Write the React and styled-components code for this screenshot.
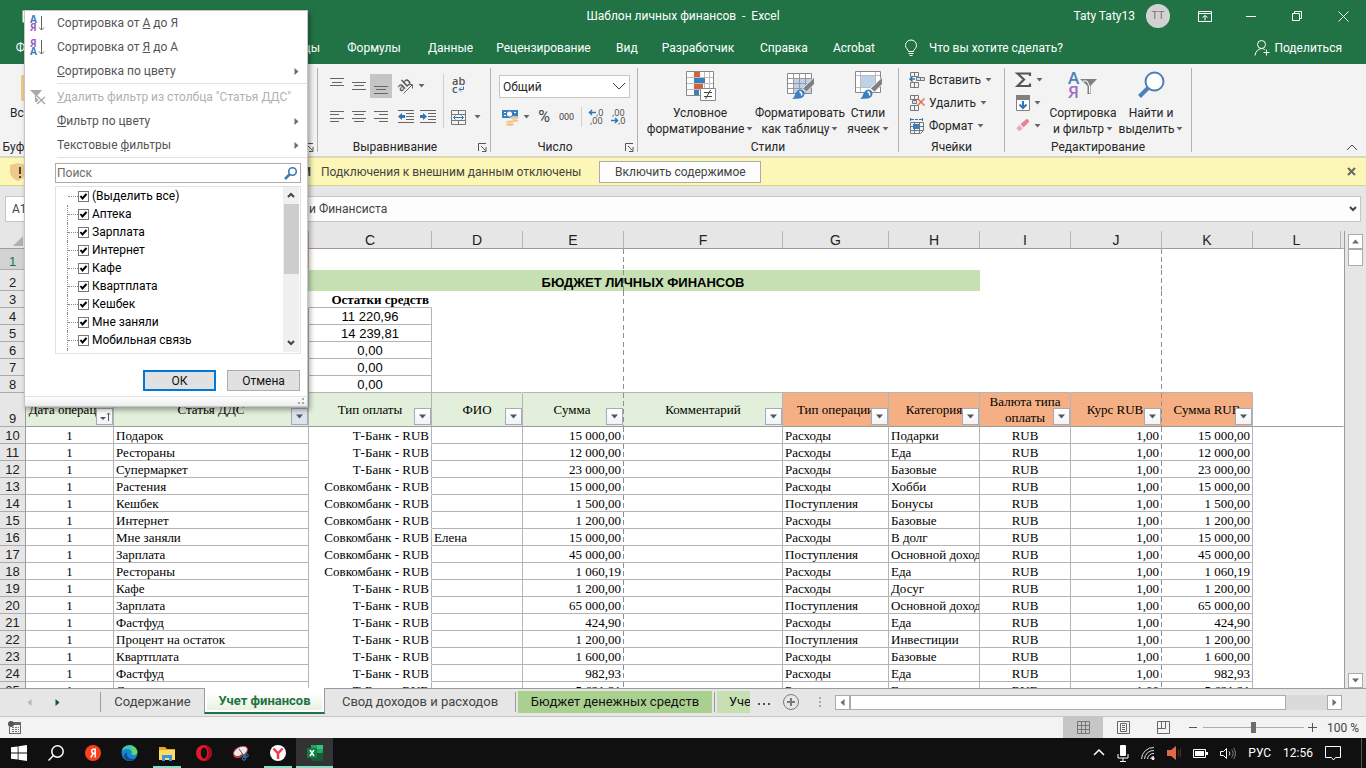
import React from "react";
import styled, { createGlobalStyle, css } from "styled-components";

const ui = `Roboto, "Noto Sans", sans-serif`;
const serif = `"Liberation Serif", serif`;
const arial = `"Liberation Sans", sans-serif`;

const GlobalStyle = createGlobalStyle`
  * {
    box-sizing: border-box;
  }
  body {
    margin: 0;
    font-family: ${ui};
    font-size: 12px;
    line-height: 16px;
    color: #262626;
    overflow: hidden;
  }
  button, input, select {
    font: inherit;
    color: inherit;
    border: 0;
    padding: 0;
    margin: 0;
    background: none;
    border-radius: 0;
  }
  svg {
    display: block;
    flex: none;
    overflow: visible;
  }
`;

const Window = styled.div`
  position: relative;
  display: flex;
  flex-direction: column;
  height: 100vh;
  background: #e6e6e6;
`;

/* ---------- title and tabs ---------- */
const TitleBar = styled.header`
  display: grid;
  grid-template-columns: 1fr auto 1fr;
  align-items: center;
  height: 32px;
  flex: none;
  background: #217346;
  color: #fff;
  white-space: pre;
`;
const QuickAccess = styled.div`
  padding-left: 22px;
`;
const TitleRight = styled.div`
  display: flex;
  align-items: center;
  justify-content: flex-end;
`;
const Avatar = styled.span`
  width: 24px;
  height: 24px;
  margin: 0 12px 0 11px;
  border-radius: 50%;
  background: #d2d2d2;
  color: #8a7468;
  font-size: 11px;
  line-height: 24px;
  text-align: center;
`;
const WindowButton = styled.button`
  display: flex;
  align-items: center;
  justify-content: center;
  width: 46px;
  height: 32px;
`;
const TabBar = styled.nav`
  display: flex;
  align-items: center;
  height: 32px;
  flex: none;
  background: #217346;
  color: #fff;
`;
const RibbonTab = styled.button`
  width: ${(props) => props.$w}px;
  height: 32px;
  white-space: nowrap;
  text-align: ${(props) => props.$align || "center"};
`;
const TellMe = styled.button`
  display: flex;
  align-items: center;
  gap: 12px;
  margin-left: 3px;
`;
const Share = styled.button`
  display: flex;
  align-items: center;
  gap: 4px;
  margin-left: auto;
  padding-right: 24px;
`;

/* ---------- ribbon ---------- */
const RibbonBar = styled.section`
  display: flex;
  height: 93px;
  flex: none;
  padding: 4px 0;
  background: #f3f3f3;
  border-bottom: 1px solid #d2d2d2;
`;
const Group = styled.div`
  display: flex;
  flex-direction: column;
  width: ${(props) => props.$w}px;
  border-right: 1px solid #b1b1b1;
`;
const GroupBody = styled.div`
  display: flex;
  flex: 1;
  align-items: flex-start;
  padding: ${(props) => props.$pad};
`;
const GroupFooter = styled.div`
  display: flex;
  align-items: center;
  height: 9px;
  line-height: 9px;
  text-align: center;
  white-space: nowrap;
  span {
    flex: 1;
  }
  button {
    margin: 0 3px 0 6px;
  }
`;
const ToolGrid = styled.div`
  display: flex;
  flex-direction: column;
  gap: 7px;
`;
const ToolStack = styled(ToolGrid)`
  gap: 0;
  button {
    height: 23px;
  }
`;
const ToolRow = styled.div`
  display: flex;
  align-items: center;
  height: 24px;
`;
const Tool = styled.button`
  display: flex;
  align-items: center;
  justify-content: ${(props) => (props.$start ? "flex-start" : "center")};
  gap: ${(props) => props.$gap || 4}px;
  width: ${(props) => props.$w || 22}px;
  height: 24px;
  white-space: nowrap;
  background: ${(props) => (props.$active ? "#c5c5c5" : "transparent")};
`;
const ToolDivider = styled.div`
  width: 1px;
  height: ${(props) => props.$h}px;
  margin: 0 ${(props) => props.$m || 0}px;
  background: #d0d0d0;
`;
const BigTool = styled.button`
  display: flex;
  flex-direction: column;
  align-items: center;
  width: ${(props) => props.$w}px;
  white-space: nowrap;
  svg.art {
    margin-bottom: 2px;
  }
  span {
    display: flex;
    align-items: center;
    gap: 2px;
  }
`;
const FormatBox = styled.div`
  display: flex;
  align-items: center;
  width: 131px;
  height: 23px;
  padding: 0 3px;
  border: 1px solid #c6c6c6;
  background: #fff;
  select {
    appearance: none;
    flex: 1;
    min-width: 0;
    height: 20px;
  }
`;
const Percent = styled.span`
  font-size: 16px;
  color: #444;
`;
const Thousands = styled.span`
  font-size: 9px;
  color: #444;
`;
const CollapseCorner = styled.button`
  align-self: flex-end;
  margin-left: auto;
  padding-right: 8px;
`;

/* ---------- message bar and formula bar ---------- */
const MessageBar = styled.section`
  display: flex;
  align-items: center;
  height: 29px;
  flex: none;
  padding-left: 10px;
  background: #fcf7b6;
  border-top: 1px solid #e3dea0;
  border-bottom: 1px solid #d8d38b;
  color: #444;
`;
const Warning = styled.strong`
  width: 285px;
  margin-right: 10px;
  text-align: right;
  white-space: nowrap;
`;
const EnableButton = styled.button`
  width: 162px;
  height: 22px;
  margin-left: 18px;
  border: 1px solid #ababab;
  background: #fdfdfd;
`;
const CloseMessage = styled.button`
  margin-left: auto;
  padding-right: 10px;
`;
const FormulaBar = styled.section`
  display: flex;
  gap: 8px;
  flex: none;
  padding: 10px 5px 9px;
  color: #444;
`;
const NameBox = styled.input`
  width: 86px;
  height: 26px;
  padding-left: 6px;
  border: 1px solid #c6c6c6;
  background: #fff;
`;
const FormulaField = styled.div`
  display: flex;
  align-items: center;
  flex: 1;
  height: 26px;
  padding-right: 3px;
  border: 1px solid #c6c6c6;
  background: #fdfdfd;
  input {
    flex: 1;
    height: 20px;
    padding-left: 209px;
  }
`;

/* ---------- sheet ---------- */
const SheetArea = styled.main`
  display: flex;
  flex: 1;
  min-height: 0;
`;
const SheetView = styled.div`
  flex: 1;
  min-width: 0;
  overflow: hidden;
  background: linear-gradient(#e6e6e6 17px, #9b9b9b 17px, #9b9b9b 18px, #fff 18px);
  border-right: 1px solid #9b9b9b;
`;
const Grid = styled.table`
  width: 100%;
  table-layout: fixed;
  border-collapse: separate;
  border-spacing: 0;
  font-family: ${serif};
  font-size: 13px;
  line-height: 15px;
  color: #000;
`;
const ColHead = styled.th`
  height: 18px;
  padding: 1px 0 0;
  background: #e6e6e6;
  border-bottom: 1px solid #9b9b9b;
  border-right: 1px solid ${(props) => (props.$last ? "transparent" : "#b4b4b4")};
  font: 14px/16px ${arial};
  color: #222;
  svg {
    margin: 2px 2px 0 auto;
  }
`;
const RowHead = styled.th`
  height: ${(props) => props.$h || 17}px;
  padding: 1px 0 0;
  background: ${(props) => (props.$active ? "#d2d2d2" : "#e6e6e6")};
  border-right: 1px solid #9b9b9b;
  border-bottom: 1px solid #ababab;
  color: ${(props) => (props.$active ? "#217346" : "#222")};
  font: 13px/15px ${arial};
  vertical-align: bottom;
`;
const dashed = css`
  padding-right: 3px;
  border-right: 0;
  background-image: repeating-linear-gradient(to bottom, #8f8f8f 0 5px, transparent 5px 8px);
  background-size: 1px 100%;
  background-position: ${(props) => props.$dashAt || "right"} top;
  background-repeat: no-repeat;
`;
const Cell = styled.td`
  height: 17px;
  padding: 1px 2px 0;
  overflow: hidden;
  white-space: nowrap;
  text-align: ${(props) => props.$align || "left"};
  border-right: 1px solid ${(props) => props.$edge || (props.$plain ? "transparent" : "#b4b4b4")};
  border-bottom: 1px solid ${(props) => props.$line || (props.$plain || props.$open ? "transparent" : "#b4b4b4")};
  ${(props) => props.$dash && dashed}
`;
const BalanceCell = styled(Cell)`
  font-family: ${arial};
`;
const CaptionCell = styled(Cell)`
  font-weight: bold;
  border-bottom-color: #b4b4b4;
`;
const BannerCell = styled.td`
  height: 21px;
  padding: 4px 0 0;
  background-color: #c6e0b4;
  font: bold 13px/17px ${arial};
  text-align: center;
  ${(props) => props.$dash && dashed}
`;
const HeadCell = styled.td`
  position: relative;
  height: 34px;
  padding: 0;
  overflow: hidden;
  white-space: pre;
  line-height: 16px;
  text-align: center;
  background-color: ${(props) => (props.$orange ? "#f4b084" : "#e2efda")};
  border-right: 1px solid #b4b4b4;
  border-bottom: 1px solid #9b9b9b;
  ${(props) => props.$dash && dashed}
`;
const FilterButton = styled.button`
  position: absolute;
  right: ${(props) => (props.$dash ? 1 : 0)}px;
  bottom: 1px;
  display: flex;
  align-items: center;
  justify-content: center;
  width: 17px;
  height: 17px;
  border: 1px solid #a3abba;
  background: ${(props) => (props.$pressed ? "#dfe3ec" : "linear-gradient(#fff, #f1f3f8)")};
`;
const VScroll = styled.div`
  display: flex;
  flex-direction: column;
  align-items: center;
  width: 21px;
  padding-top: 3px;
  background: #e6e6e6;
`;
const ScrollButton = styled.button`
  display: flex;
  align-items: center;
  justify-content: center;
  width: 15px;
  height: 15px;
  flex: none;
  border: 1px solid #ababab;
  background: #fff;
`;
const VThumb = styled.div`
  width: 15px;
  height: 17px;
  margin-bottom: auto;
  border: 1px solid #ababab;
  background: #fff;
`;

/* ---------- sheet tabs ---------- */
const TabStrip = styled.footer`
  display: flex;
  height: 29px;
  flex: none;
  padding-bottom: 1px;
  background: #e6e6e6;
  border-top: 1px solid #9b9b9b;
  border-bottom: 1px solid #c6c6c6;
  font-size: 13px;
  color: #444;
`;
const TabArrows = styled.div`
  display: flex;
  align-items: center;
  gap: 19px;
  width: 100px;
  height: 26px;
  padding-left: 25px;
`;
const SheetTab = styled.button`
  height: 22px;
  width: ${(props) => props.$w}px;
  margin: 2px 2px 0 2px;
  overflow: hidden;
  white-space: nowrap;
  background: ${(props) => props.$fill || "transparent"};
  color: ${(props) => (props.$fill ? "#111" : "#444")};
  text-align: ${(props) => props.$align || "center"};
  padding-left: ${(props) => (props.$align ? 12 : 0)}px;
`;
const ActiveTab = styled(SheetTab)`
  height: 26px;
  margin: -1px 0 0;
  padding-top: 2px;
  border: 1px solid #9b9b9b;
  border-top: 0;
  border-bottom: 2px solid #217346;
  background: linear-gradient(#fff 20%, #e6f0dc);
  box-shadow: inset 0 0 0 2px #fff;
  color: #217346;
  font-weight: bold;
`;
const TabDivider = styled.div`
  width: 1px;
  height: 20px;
  margin-top: 3px;
  background: #9b9b9b;
`;
const StripTools = styled.div`
  display: flex;
  align-items: center;
  height: 26px;
  padding: 0 7px 0 6px;
  gap: 13px;
`;
const HScroll = styled.div`
  display: flex;
  flex: 1;
  height: 15px;
  margin: 6px 24px 0 0;
  background: #dadada;
`;
const HThumb = styled.div`
  width: 436px;
  margin-right: auto;
  border: 1px solid #ababab;
  background: #fff;
`;

/* ---------- status bar ---------- */
const StatusBar = styled.footer`
  display: flex;
  align-items: center;
  height: 21px;
  flex: none;
  padding-left: 8px;
  background: #f3f3f3;
  color: #444;
`;
const ViewButtons = styled.div`
  display: flex;
  margin-left: auto;
`;
const ViewButton = styled.button`
  display: flex;
  align-items: center;
  justify-content: center;
  width: 40px;
  height: 21px;
  background: ${(props) => (props.$active ? "#c6c6c6" : "transparent")};
`;
const ZoomRange = styled.input`
  appearance: none;
  width: 101px;
  height: 11px;
  margin: 0 4px;
  background: linear-gradient(#ababab, #ababab) center / 100% 1px no-repeat;
  &::-webkit-slider-thumb {
    appearance: none;
    width: 5px;
    height: 11px;
    background: #6d6d6d;
  }
`;
const ZoomLabel = styled.span`
  width: 49px;
  padding-right: 7px;
  text-align: right;
  white-space: nowrap;
`;

/* ---------- taskbar ---------- */
const TaskBar = styled.footer`
  display: flex;
  height: 30px;
  flex: none;
  background: #101010;
  color: #fff;
`;
const TaskButton = styled.button`
  display: flex;
  align-items: center;
  justify-content: center;
  width: 37px;
  height: 30px;
  background: ${(props) =>
    props.$open &&
    `linear-gradient(#80dfc9, #80dfc9) center bottom / ${props.$active ? 37 : 28}px 2px no-repeat`};
  background-color: ${(props) => (props.$active ? "#333" : "transparent")};
`;
const Tray = styled.div`
  display: flex;
  align-items: center;
  gap: 12px;
  margin: 0 4px 0 auto;
  padding-right: 20px;
  border-right: 1px solid #555;
`;
const TrayText = styled.span`
  white-space: nowrap;
`;

/* ---------- filter menu ---------- */
const Menu = styled.div`
  position: absolute;
  left: 24px;
  top: 10px;
  display: flex;
  flex-direction: column;
  width: 284px;
  background: #fff;
  border: 1px solid #c6c6c6;
  box-shadow: 2px 3px 5px rgba(0, 0, 0, 0.35);
  color: #555;
`;
const MenuItem = styled.button`
  display: grid;
  grid-template-columns: 32px 1fr 15px;
  align-items: center;
  height: 24px;
  text-align: left;
  white-space: nowrap;
  color: ${(props) => (props.disabled ? "#b1b1b1" : "#555")};
  svg:first-child {
    margin-left: 5px;
  }
`;
const MenuRule = styled.hr`
  width: 250px;
  height: 1px;
  margin: 0 0 1px 32px;
  border: 0;
  background: #e1e1e1;
`;
const SearchBox = styled.label`
  display: flex;
  align-items: center;
  height: 20px;
  margin: 4px 6px 0 30px;
  padding: 0 2px 0 1px;
  border: 1px solid #ababab;
  input {
    flex: 1;
    min-width: 0;
    outline: 0;
  }
  input::placeholder {
    color: #6d6d6d;
  }
`;
const CheckList = styled.div`
  display: flex;
  height: 168px;
  margin: 3px 6px 0 30px;
  padding: 0 1px 1px;
  border: 1px solid #e1e1e1;
  overflow: hidden;
`;
const CheckItems = styled.div`
  flex: 1;
  overflow: hidden;
`;
const CheckRow = styled.label`
  display: flex;
  align-items: center;
  height: 18px;
  margin-left: 10px;
  border-left: 1px dotted #888;
  color: #000;
  white-space: nowrap;
  &::before {
    content: "";
    width: 10px;
    border-top: 1px dotted #888;
  }
  &:first-child {
    border-left-color: transparent;
  }
`;
const CheckBox = styled.input`
  appearance: none;
  width: 11px;
  height: 11px;
  outline: 1px solid #777;
  outline-offset: -1px;
  background: #fff;
`;
const CheckMark = styled.span`
  display: grid;
  margin-right: 3px;
  > * {
    grid-area: 1 / 1;
    margin: 0;
  }
  svg {
    pointer-events: none;
  }
`;
const ListScroll = styled.div`
  display: flex;
  flex-direction: column;
  align-items: center;
  width: 16px;
  padding: 6px 0;
  background: #f0f0f0;
`;
const ListThumb = styled.div`
  width: 15px;
  height: 70px;
  margin: 5px 0 auto;
  background: #cdcdcd;
`;
const MenuActions = styled.div`
  display: flex;
  justify-content: flex-end;
  gap: 11px;
  padding: 16px 7px 5px;
`;
const DialogButton = styled.button`
  width: 73px;
  height: 21px;
  border: ${(props) => (props.$primary ? "2px solid #0078d7" : "1px solid #adadad")};
  background: #e1e1e1;
  color: #111;
`;
const Grip = styled.div`
  display: flex;
  justify-content: flex-end;
  align-items: flex-end;
  height: 10px;
  padding: 2px 3px;
  border-top: 1px solid #dce3e8;
  background: linear-gradient(#fff, #ececec);
`;

/* ---------- small drawings ---------- */
const Caret = () => (
  <svg width="7" height="4" viewBox="0 0 7 4">
    <path d="M0.5 0h6L3.5 3.5z" fill="#666" />
  </svg>
);
const Arrow = ({ dir = "down", color = "#6d6d6d" }) => {
  const turn = { down: 0, left: 90, up: 180, right: 270 }[dir];
  return (
    <svg width="9" height="9" viewBox="0 0 9 9">
      <path d="M1 2.5h7L4.5 6.5z" fill={color} transform={`rotate(${turn} 4.5 4.5)`} />
    </svg>
  );
};
const Chevron = ({ w = 12, up, color = "#444", stroke = 1 }) => (
  <svg width={w} height={w / 2 + 2} viewBox={`0 0 ${w} ${w / 2 + 2}`} fill="none" stroke={color} strokeWidth={stroke}>
    <path d={up ? `M1 ${w / 2}L${w / 2} 1L${w - 1} ${w / 2}` : `M1 1L${w / 2} ${w / 2}L${w - 1} 1`} />
  </svg>
);
const Launcher = () => (
  <button aria-label="Параметры">
    <svg width="9" height="9" viewBox="0 0 9 9" fill="none" stroke="#555">
      <path d="M0.5 8V0.5H8M3 3l4.5 4.5M8 4v4.5H4" />
    </svg>
  </button>
);
const Lines = ({ rows, color = "#666" }) => (
  <svg width="14" height="18" viewBox="0 0 14 18" fill={color} shapeRendering="crispEdges">
    {rows.map(([x, y, w]) => (
      <rect key={y} x={x} y={y} width={w} height="1" />
    ))}
  </svg>
);
const full = (ys) => ys.map((y, i) => (i === 1 ? [2, y, 10] : [0, y, 14]));
const Indent = ({ right }) => (
  <svg width="16" height="14" viewBox="0 0 16 14" shapeRendering="crispEdges">
    <g fill="#666">
      <rect width="16" height="1" />
      <rect x="8" y="3" width="8" height="1" />
      <rect x="8" y="6" width="8" height="1" />
      <rect x="8" y="9" width="8" height="1" />
      <rect y="12" width="16" height="1" />
    </g>
    <path
      d={right ? "M0 5h3V3l4 3.5L3 10V8H0z" : "M7 5H4V3L0 6.5 4 10V8h3z"}
      fill="#2e75b6"
      shapeRendering="auto"
    />
  </svg>
);
const Orientation = () => (
  <svg width="17" height="17" viewBox="0 0 17 17">
    <text x="0" y="12" fontSize="12" fontFamily="Open Sans" fontWeight="600" fill="#555" transform="rotate(-42 5 8)">
      ab
    </text>
    <path d="M6.500 15.500L15 7M11.500 6.500H15.500V10.500" stroke="#666" fill="none" />
  </svg>
);
const WrapText = () => (
  <svg width="15" height="18" viewBox="0 0 15 18">
    <g fontSize="11" fontFamily="Open Sans" fontWeight="600" fill="#555">
      <text x="1" y="8">ab</text>
      <text x="1" y="16">c</text>
    </g>
    <path d="M12.500 9.500v3H8.500M10 10.500l-2 2 2 2" stroke="#2e75b6" fill="none" />
  </svg>
);
const MergeCells = () => (
  <svg width="15" height="15" viewBox="0 0 15 15" fill="none" stroke="#777">
    <path d="M0.500 0.500h14v14H0.500zM0.500 4.500h14M0.500 10.500h14M7.500 0.500v4M7.500 10.500v4" />
    <path d="M2.500 7.500h10M4.500 5.500l-2 2 2 2M10.500 5.500l2 2-2 2" stroke="#2e75b6" />
  </svg>
);
const Money = () => (
  <svg width="18" height="17" viewBox="0 0 18 17">
    <path d="M1 1h16v8H1z" fill="#3b7fc1" />
    <path d="M3 3h2v1H3zM13 3h2v1h-2zM3 6h2v1H3z" fill="#fff" />
    <circle cx="8.500" cy="5" r="2.500" fill="#fff" />
    <g fill="#edc17c" stroke="#f3f3f3" strokeWidth="0.600">
      <ellipse cx="13.500" cy="9" rx="4" ry="1.600" />
      <ellipse cx="13.500" cy="11.500" rx="4" ry="1.600" />
      <ellipse cx="9" cy="13" rx="4" ry="1.600" />
      <ellipse cx="9" cy="15.500" rx="4" ry="1.600" />
    </g>
  </svg>
);
const Decimals = ({ less }) => (
  <svg width="16" height="16" viewBox="0 0 16 16">
    <g fontSize="9" fontFamily="Open Sans" fill="#444">
      <text x={less ? 1 : 7} y="7">{less ? ",00" : ",0"}</text>
      <text x={less ? 7 : 1} y="15">{less ? ",0" : ",00"}</text>
    </g>
    <path
      d={less ? "M0 11.500h6M4 9l2.500 2.500L4 14" : "M7 3.500H1M3 1L0.500 3.500 3 6"}
      stroke="#2e75b6"
      strokeWidth="1.500"
      fill="none"
    />
  </svg>
);
const CondFormat = () => (
  <svg className="art" width="32" height="34" viewBox="0 0 32 34">
    <path d="M2.500 2.500h27v24h-27z" fill="#fff" stroke="#888" />
    <path d="M3 8.500h26M3 14.500h26M3 20.500h26M10.500 3v23M20.500 3v23M25.500 3v23" stroke="#bbb" fill="none" />
    <path d="M10 3h6v5h-6zM10 15h9v5h-9z" fill="#d8603c" />
    <path d="M10 9h11v5H10zM10 21h5v5h-5z" fill="#3b7fc1" />
    <path d="M16.500 19.500h15v12h-15z" fill="#fff" stroke="#888" />
    <path d="M20 23.500h8M20 27.500h8M26.500 21l-5 9" stroke="#444" />
  </svg>
);
const Brush = () => (
  <g>
    <path d="M30.500 8v7l-8 8-4-3.500z" fill="#808080" stroke="#f3f3f3" />
    <path d="M8 30c3-1 3-9 8-9.500 6 0 6 8 0 9z" fill="#3b7fc1" />
    <path d="M15.500 22.500a3 3 0 0 1 2 4" stroke="#fff" strokeWidth="1.500" fill="none" />
  </g>
);
const TableStyle = () => (
  <svg className="art" width="32" height="34" viewBox="0 0 32 34">
    <path d="M3.500 4.500h24v20h-24z" fill="#fff" stroke="#888" />
    <path d="M9 9h18v15H9z" fill="#bdd2ea" />
    <path d="M4 9.500h23M4 14.500h23M4 19.500h23M9.500 5v19M15.500 5v19M21.500 5v19" stroke="#999" fill="none" />
    <Brush />
  </svg>
);
const CellStyle = () => (
  <svg className="art" width="32" height="34" viewBox="0 0 32 34">
    <path d="M3.500 2.500h25v21h-25z" fill="#fff" stroke="#888" />
    <path d="M4 6.500h24M4 18.500h24M8.500 3v20M23.500 3v20" stroke="#bbb" fill="none" />
    <path d="M9 7h14v11H9z" fill="#bdd2ea" />
    <Brush />
  </svg>
);
const CellsIcon = ({ kind }) => (
  <svg width="16" height="16" viewBox="0 0 16 16" fill="none" stroke="#777">
    {kind === "format" ? (
      <>
        <path d="M1.500 4.500h13v8h-13zM1.500 12.500v3h10l3-3M1.500 8.500h13M5.500 4.500v11M10.500 4.500v11" />
        <path d="M4 6h6v5H4z" fill="#3b7fc1" stroke="none" />
        <path d="M1.500 0v3M13.500 0v3M2 1.500h11" stroke="#2e75b6" strokeDasharray="3 1" />
      </>
    ) : (
      <>
        <path d="M1.500 0.500h8v4h-8zM5.500 0.500v4M1.500 10.500h8v5h-8zM5.500 10.500v5" />
        {kind === "insert" ? (
          <>
            <path d="M7.500 5.500h8v3h-8zM11.500 5.500v3" fill="#d6e3f2" />
            <path d="M6 7H1M3.500 4.500L1 7l2.500 2.500" stroke="#2e75b6" strokeWidth="1.500" />
          </>
        ) : (
          <>
            <path d="M3.500 5.500h4v3h-4z" fill="#d6e3f2" />
            <path d="M8.500 3.500l7 7M15.500 3.500l-7 7" stroke="#e07050" strokeWidth="1.500" />
          </>
        )}
      </>
    )}
  </svg>
);
const Sigma = () => (
  <svg width="17" height="16" viewBox="0 0 17 16">
    <path d="M15 4V1.500H2.500L9 7.500 2.500 14H15v-2.500" fill="none" stroke="#555" strokeWidth="2.200" />
  </svg>
);
const FillDown = () => (
  <svg width="15" height="16" viewBox="0 0 15 16">
    <path d="M1.500 0.500h13v15h-13z" fill="#fff" stroke="#808080" />
    <path d="M1 0h14v5H1z" fill="#808080" />
    <path d="M8 6v7M4.500 9.500L8 13l3.500-3.500" stroke="#2e75b6" strokeWidth="2" fill="none" />
  </svg>
);
const Eraser = () => (
  <svg width="15" height="15" viewBox="0 0 15 15">
    <path d="M5.500 6l6-5c1-.6 3 1.500 2.500 3L8.500 9.500z" fill="#e88494" />
    <path d="M4.500 7l3.200 3.500L5 13c-1.500 0-3.500-2-3.500-3z" fill="#f2a9b4" />
  </svg>
);
const SortFilter = () => (
  <svg className="art" width="32" height="34" viewBox="0 0 32 34">
    <g fontFamily="Open Sans" fontWeight="600" fontSize="17">
      <text x="1" y="15" fill="#4a7fb8">А</text>
      <text x="1" y="29" fill="#a06cc0">Я</text>
    </g>
    <path d="M13 10h17l-6.500 7v8h-3v-8z" fill="#808080" />
    <path d="M16 12h4l2.500 5v7" stroke="#fff" fill="none" />
  </svg>
);
const Magnifier = () => (
  <svg className="art" width="32" height="34" viewBox="0 0 32 34">
    <circle cx="19.500" cy="12.500" r="9" fill="#fff" stroke="#4a80b8" strokeWidth="2" />
    <path d="M13 19l-8.500 8.500" stroke="#4a80b8" strokeWidth="4" />
  </svg>
);
const SortIcon = ({ reverse }) => (
  <svg width="16" height="17" viewBox="0 0 16 17">
    <g fontFamily="Open Sans" fontWeight="700" fontSize="10">
      <text x="0" y="8" fill={reverse ? "#9b5fc0" : "#3f7cba"}>{reverse ? "Я" : "А"}</text>
      <text x="0" y="16" fill={reverse ? "#3f7cba" : "#9b5fc0"}>{reverse ? "А" : "Я"}</text>
    </g>
    <path d="M11.500 1v14M9 12.500l2.500 2.500L14 12.500" stroke="#666" fill="none" />
  </svg>
);
const ClearFilter = () => (
  <svg width="16" height="16" viewBox="0 0 16 16">
    <path d="M0 1h12L8 6v7H5V6z" fill="#aaa" />
    <path d="M7 7l8 8M15 8l-8 7" stroke="#fff" strokeWidth="3.500" />
    <path d="M7 7l8 8M15 8l-8 7" stroke="#aaa" strokeWidth="1.500" />
  </svg>
);
const Tick = () => (
  <svg width="11" height="11" viewBox="0 0 11 11">
    <path d="M2.500 5L4.500 7.500 8.500 3" stroke="#000" strokeWidth="2" fill="none" />
  </svg>
);

/* ---------- data ---------- */
const columns = [
  ["A", 88],
  ["B", 195],
  ["C", 123],
  ["D", 91],
  ["E", 101],
  ["F", 159],
  ["G", 106],
  ["H", 91],
  ["I", 91],
  ["J", 91],
  ["K", 91],
  ["L", 88],
];
const balances = ["11 220,96", "14 239,81", "0,00", "0,00", "0,00"];
const headings = [
  { text: "Дата операции", sorted: true },
  { text: "Статья ДДС", pressed: true },
  { text: "Тип оплаты" },
  { text: "ФИО" },
  { text: "Сумма", dash: true },
  { text: "Комментарий" },
  { text: "Тип операции", orange: true },
  { text: "Категория", orange: true },
  { text: "Валюта типа\nоплаты", orange: true },
  { text: "Курс RUB", orange: true, dash: true },
  { text: "Сумма RUB", orange: true },
];
const T = "Т-Банк - RUB";
const S = "Совкомбанк - RUB";
const records = [
  ["Подарок", T, "", "15 000,00", "Расходы", "Подарки"],
  ["Рестораны", T, "", "12 000,00", "Расходы", "Еда"],
  ["Супермаркет", T, "", "23 000,00", "Расходы", "Базовые"],
  ["Растения", S, "", "15 000,00", "Расходы", "Хобби"],
  ["Кешбек", S, "", "1 500,00", "Поступления", "Бонусы"],
  ["Интернет", S, "", "1 200,00", "Расходы", "Базовые"],
  ["Мне заняли", S, "Елена", "15 000,00", "Расходы", "В долг"],
  ["Зарплата", S, "", "45 000,00", "Поступления", "Основной доход"],
  ["Рестораны", S, "", "1 060,19", "Расходы", "Еда"],
  ["Кафе", T, "", "1 200,00", "Расходы", "Досуг"],
  ["Зарплата", T, "", "65 000,00", "Поступления", "Основной доход"],
  ["Фастфуд", T, "", "424,90", "Расходы", "Еда"],
  ["Процент на остаток", T, "", "1 200,00", "Поступления", "Инвестиции"],
  ["Квартплата", T, "", "1 600,00", "Расходы", "Базовые"],
  ["Фастфуд", T, "", "982,93", "Расходы", "Еда"],
  ["Супермаркет", T, "", "5 621,21", "Расходы", "Еда"],
];
const articles = [
  "(Выделить все)",
  "Аптека",
  "Зарплата",
  "Интернет",
  "Кафе",
  "Квартплата",
  "Кешбек",
  "Мне заняли",
  "Мобильная связь",
  "Подарок",
];

function Header() {
  return (
    <>
      <TitleBar>
        <QuickAccess>
          <svg width="13" height="13" viewBox="0 0 13 13">
            <path d="M0.500 0.500h12v12H0.500z" fill="#fff" />
          </svg>
        </QuickAccess>
        <span>Шаблон личных финансов  -  Excel</span>
        <TitleRight>
          Taty Taty13
          <Avatar>TT</Avatar>
          <WindowButton aria-label="Параметры отображения ленты">
            <svg width="14" height="11" viewBox="0 0 14 11" fill="none" stroke="#fff">
              <path d="M0.500 0.500h13v10H0.500zM0.500 2.500h13M7 9.500V4.500M4.500 6.500L7 4.500l2.500 2" />
            </svg>
          </WindowButton>
          <WindowButton aria-label="Свернуть">
            <svg width="10" height="1" viewBox="0 0 10 1">
              <path d="M0 0h10v1H0z" fill="#fff" />
            </svg>
          </WindowButton>
          <WindowButton aria-label="Восстановить">
            <svg width="10" height="10" viewBox="0 0 10 10" fill="none" stroke="#fff">
              <path d="M0.500 2.500h7v7h-7zM2.500 2.500v-2h7v7h-2" />
            </svg>
          </WindowButton>
          <WindowButton aria-label="Закрыть">
            <svg width="11" height="11" viewBox="0 0 11 11" stroke="#fff">
              <path d="M0.500 0.500l10 10M10.500 0.500l-10 10" />
            </svg>
          </WindowButton>
        </TitleRight>
      </TitleBar>
      <TabBar>
        <RibbonTab $w={61}>Файл</RibbonTab>
        <RibbonTab $w={259} $align="right">
          Разметка страницы
        </RibbonTab>
        <RibbonTab $w={108}>Формулы</RibbonTab>
        <RibbonTab $w={43}>Данные</RibbonTab>
        <RibbonTab $w={145}>Рецензирование</RibbonTab>
        <RibbonTab $w={20}>Вид</RibbonTab>
        <RibbonTab $w={124}>Разработчик</RibbonTab>
        <RibbonTab $w={46}>Справка</RibbonTab>
        <RibbonTab $w={96}>Acrobat</RibbonTab>
        <TellMe>
          <svg width="12" height="17" viewBox="0 0 12 17" fill="none" stroke="#fff">
            <path d="M3.500 11.500c0-2-3-3-3-6a5 5 0 0 1 11 0c0 3-3 4-3 6zM3.500 13.500h5M4.500 15.500h3" />
          </svg>
          Что вы хотите сделать?
        </TellMe>
        <Share>
          <svg width="16" height="16" viewBox="0 0 16 16" fill="none" stroke="#fff">
            <circle cx="7.500" cy="4.500" r="4" />
            <path d="M1 15.500c.5-4 3-6.500 6.500-7 1.500 0 2.500.6 3.500 1.500M12.500 9.500v6M9.500 12.500h6" />
          </svg>
          Поделиться
        </Share>
      </TabBar>
    </>
  );
}

function Ribbon() {
  return (
    <RibbonBar>
      <Group $w={86}>
        <GroupBody $pad="1px 0 0 5px">
          <BigTool $w={62}>
            <svg className="art" width="32" height="34" viewBox="0 0 32 34">
              <path d="M1 6h24v26H1z" fill="#f0c987" />
              <path d="M7 3h10v5H7z" fill="#666" />
            </svg>
            Вставить
          </BigTool>
        </GroupBody>
        <GroupFooter>
          <span>Буфер обмена</span>
        </GroupFooter>
      </Group>
      <Group $w={232}>
        <GroupBody />
        <GroupFooter>
          <span>Шрифт</span>
          <Launcher />
        </GroupFooter>
      </Group>
      <Group $w={173}>
        <GroupBody $pad="6px 0 0 8px">
          <ToolGrid>
            <ToolRow>
              <Tool aria-label="По верхнему краю">
                <Lines rows={full([1, 5, 8])} />
              </Tool>
              <Tool aria-label="По середине">
                <Lines rows={full([5, 8, 12])} />
              </Tool>
              <Tool aria-label="По нижнему краю" $active>
                <Lines rows={full([9, 12, 16])} />
              </Tool>
              <Tool aria-label="Ориентация" $w={38}>
                <Orientation />
                <Caret />
              </Tool>
            </ToolRow>
            <ToolRow>
              <Tool aria-label="По левому краю">
                <Lines rows={[[0, 3, 14], [0, 6, 9], [0, 10, 14], [0, 13, 9]]} />
              </Tool>
              <Tool aria-label="По центру">
                <Lines rows={[[0, 3, 14], [2, 6, 10], [0, 10, 14], [2, 13, 10]]} />
              </Tool>
              <Tool aria-label="По правому краю">
                <Lines rows={[[0, 3, 14], [5, 6, 9], [0, 10, 14], [5, 13, 9]]} />
              </Tool>
              <Tool aria-label="Уменьшить отступ" $w={28}>
                <Indent />
              </Tool>
              <Tool aria-label="Увеличить отступ" $w={16}>
                <Indent right />
              </Tool>
            </ToolRow>
          </ToolGrid>
          <ToolDivider $h={54} $m={7} />
          <ToolGrid>
            <Tool aria-label="Перенести текст" $w={32} $start>
              <WrapText />
            </Tool>
            <Tool aria-label="Объединить" $w={32} $start $gap={8}>
              <MergeCells />
              <Caret />
            </Tool>
          </ToolGrid>
        </GroupBody>
        <GroupFooter>
          <span>Выравнивание</span>
          <Launcher />
        </GroupFooter>
      </Group>
      <Group $w={147}>
        <GroupBody $pad="7px 0 0 8px">
          <ToolGrid>
            <FormatBox>
              <select aria-label="Числовой формат" defaultValue="Общий">
                <option>Общий</option>
              </select>
              <Chevron w={14} />
            </FormatBox>
            <ToolRow>
              <Tool aria-label="Денежный формат" $w={33}>
                <Money />
                <Caret />
              </Tool>
              <Tool $w={24}>
                <Percent>%</Percent>
              </Tool>
              <Tool $w={21}>
                <Thousands>000</Thousands>
              </Tool>
              <ToolDivider $h={20} $m={4} />
              <Tool aria-label="Увеличить разрядность">
                <Decimals />
              </Tool>
              <Tool aria-label="Уменьшить разрядность">
                <Decimals less />
              </Tool>
            </ToolRow>
          </ToolGrid>
        </GroupBody>
        <GroupFooter>
          <span>Число</span>
          <Launcher />
        </GroupFooter>
      </Group>
      <Group $w={261}>
        <GroupBody $pad="1px 0 0 9px">
          <BigTool $w={106}>
            <CondFormat />
            Условное
            <span>
              форматирование <Caret />
            </span>
          </BigTool>
          <BigTool $w={94}>
            <TableStyle />
            Форматировать
            <span>
              как таблицу <Caret />
            </span>
          </BigTool>
          <BigTool $w={42}>
            <CellStyle />
            Стили
            <span>
              ячеек <Caret />
            </span>
          </BigTool>
        </GroupBody>
        <GroupFooter>
          <span>Стили</span>
        </GroupFooter>
      </Group>
      <Group $w={106}>
        <GroupBody $pad="0 0 0 10px">
          <ToolStack>
            {[
              ["insert", "Вставить"],
              ["delete", "Удалить"],
              ["format", "Формат"],
            ].map(([kind, label]) => (
              <Tool key={kind} $w={90} $start>
                <CellsIcon kind={kind} />
                {label}
                <Caret />
              </Tool>
            ))}
          </ToolStack>
        </GroupBody>
        <GroupFooter>
          <span>Ячейки</span>
        </GroupFooter>
      </Group>
      <Group $w={187}>
        <GroupBody $pad="0 0 0 10px">
          <ToolStack>
            <Tool aria-label="Сумма" $w={34} $start>
              <Sigma />
              <Caret />
            </Tool>
            <Tool aria-label="Заполнить" $w={34} $start>
              <FillDown />
              <Caret />
            </Tool>
            <Tool aria-label="Очистить" $w={34} $start>
              <Eraser />
              <Caret />
            </Tool>
          </ToolStack>
          <GroupBody $pad="1px 0 0 0">
            <BigTool $w={68}>
              <SortFilter />
              Сортировка
              <span>
                и фильтр <Caret />
              </span>
            </BigTool>
            <BigTool $w={68}>
              <Magnifier />
              Найти и
              <span>
                выделить <Caret />
              </span>
            </BigTool>
          </GroupBody>
        </GroupBody>
        <GroupFooter>
          <span>Редактирование</span>
        </GroupFooter>
      </Group>
      <CollapseCorner aria-label="Свернуть ленту">
        <Chevron w={12} up />
      </CollapseCorner>
    </RibbonBar>
  );
}

function Sheet() {
  return (
    <SheetArea>
      <SheetView>
        <Grid>
          <colgroup>
            <col width="26" />
            {columns.map(([name, width]) => (
              <col key={name} width={width} />
            ))}
            <col />
          </colgroup>
          <thead>
            <tr>
              <ColHead $last>
                <svg width="10" height="10" viewBox="0 0 10 10">
                  <path d="M10 0v10H0z" fill="#b1b1b1" />
                </svg>
              </ColHead>
              {columns.map(([name]) => (
                <ColHead key={name}>{name}</ColHead>
              ))}
              <ColHead $last />
            </tr>
          </thead>
          <tbody>
            <tr>
              <RowHead $h={21} $active>1</RowHead>
              <Cell $plain $edge="#f4b084" colSpan={2} />
              <Cell $plain colSpan={2} />
              <Cell $plain $dash />
              <Cell $plain colSpan={4} />
              <Cell $plain $dash />
              <Cell $plain colSpan={3} />
            </tr>
            <tr>
              <RowHead $h={21}>2</RowHead>
              <BannerCell colSpan={2} />
              <BannerCell colSpan={6} $dash $dashAt="314px">
                БЮДЖЕТ ЛИЧНЫХ ФИНАНСОВ
              </BannerCell>
              <Cell $plain />
              <Cell $plain $dash />
              <Cell $plain colSpan={3} />
            </tr>
            <tr>
              <RowHead>3</RowHead>
              <Cell $plain colSpan={2} />
              <CaptionCell $plain $align="right">
                Остатки средств
              </CaptionCell>
              <Cell $plain />
              <Cell $plain $dash />
              <Cell $plain colSpan={4} />
              <Cell $plain $dash />
              <Cell $plain colSpan={3} />
            </tr>
            {balances.map((value, i) => {
              const line = i === balances.length - 1 ? "#b4b4b4" : "transparent";
              return (
                <tr key={i}>
                  <RowHead>{i + 4}</RowHead>
                  <Cell $plain $edge="#b4b4b4" $line={line} colSpan={2} />
                  <BalanceCell $align="center">{value}</BalanceCell>
                  <Cell $plain $line={line} />
                  <Cell $dash $line={line} />
                  <Cell $plain $line={line} colSpan={4} />
                  <Cell $dash $line={line} />
                  <Cell $plain $line={line} />
                  <Cell $plain colSpan={2} />
                </tr>
              );
            })}
            <tr>
              <RowHead $h={34}>9</RowHead>
              {headings.map((head) => (
                <HeadCell key={head.text} $orange={head.orange} $dash={head.dash}>
                  {head.text}
                  <FilterButton aria-label={`Фильтр: ${head.text}`} $pressed={head.pressed} $dash={head.dash}>
                    {head.sorted ? (
                      <svg width="12" height="12" viewBox="0 0 12 12">
                        <path d="M1 6h6L4 9z" fill="#555" />
                        <path d="M9.500 10V2M8 3.500L9.500 2 11 3.500" stroke="#555" fill="none" />
                      </svg>
                    ) : (
                      <Arrow color="#555" />
                    )}
                  </FilterButton>
                </HeadCell>
              ))}
              <Cell $plain $line="#9b9b9b" colSpan={2} />
            </tr>
            {records.map(([article, account, person, sum, type, category], i) => (
              <tr key={i}>
                <RowHead>{i + 10}</RowHead>
                <Cell $align="center">1</Cell>
                <Cell>{article}</Cell>
                <Cell $align="right" $open>
                  {account}
                </Cell>
                <Cell>{person}</Cell>
                <Cell $align="right" $dash>
                  {sum}
                </Cell>
                <Cell />
                <Cell>{type}</Cell>
                <Cell>{category}</Cell>
                <Cell $align="center">RUB</Cell>
                <Cell $align="right" $dash>
                  1,00
                </Cell>
                <Cell $align="right">{sum}</Cell>
                <Cell $plain colSpan={2} />
              </tr>
            ))}
          </tbody>
        </Grid>
      </SheetView>
      <VScroll>
        <ScrollButton aria-label="Вверх">
          <Arrow dir="up" />
        </ScrollButton>
        <VThumb />
        <ScrollButton aria-label="Вниз">
          <Arrow />
        </ScrollButton>
      </VScroll>
    </SheetArea>
  );
}

function SheetTabs() {
  return (
    <TabStrip>
      <TabArrows>
        <Arrow dir="left" color="#b5b5b5" />
        <Arrow dir="right" color="#0e5c2f" />
      </TabArrows>
      <TabDivider />
      <SheetTab $w={99}>Содержание</SheetTab>
      <ActiveTab $w={121}>Учет финансов</ActiveTab>
      <SheetTab $w={186}>Свод доходов и расходов</SheetTab>
      <TabDivider />
      <SheetTab $w={194} $fill="#a9d08e">
        Бюджет денежных средств
      </SheetTab>
      <TabDivider />
      <SheetTab $w={33} $fill="#c6e0b4" $align="left">
        Уче
      </SheetTab>
      <StripTools>
        <svg width="12" height="3" viewBox="0 0 12 3" fill="#217346">
          <path d="M0 2h2v2H0zM5 2h2v2H5zM10 2h2v2h-2z" />
        </svg>
        <svg width="16" height="16" viewBox="0 0 16 16" fill="none" stroke="#7a7a7a">
          <circle cx="8" cy="8" r="7.500" />
          <path d="M8 4v8M4 8h8" strokeWidth="2" />
        </svg>
        <svg width="16" height="10" viewBox="0 0 16 10" fill="#aaa">
          <path d="M7 0h2v2H7zM7 4h2v2H7zM7 8h2v2H7z" />
        </svg>
      </StripTools>
      <HScroll>
        <ScrollButton aria-label="Влево">
          <Arrow dir="left" />
        </ScrollButton>
        <HThumb />
        <ScrollButton aria-label="Вправо">
          <Arrow dir="right" />
        </ScrollButton>
      </HScroll>
    </TabStrip>
  );
}

function Status() {
  return (
    <StatusBar>
      <svg width="13" height="13" viewBox="0 0 13 13">
        <path d="M5 1h8v3H5zM1 6h1v7H1zM12 4h1v9h-1zM1 12h12v1H1z" fill="#666" />
        <circle cx="3" cy="3" r="3" fill="#555" />
        <path d="M4 6.500h7M4 8.500h7M4 10.500h7" stroke="#777" strokeDasharray="2 1" />
      </svg>
      <ViewButtons>
        <ViewButton $active aria-label="Обычный">
          <svg width="13" height="13" viewBox="0 0 13 13" fill="none" stroke="#777">
            <path d="M0.500 0.500h12v12H0.500zM0.500 4.500h12M0.500 8.500h12M4.500 0.500v12M8.500 0.500v12" />
          </svg>
        </ViewButton>
        <ViewButton aria-label="Разметка страницы">
          <svg width="13" height="13" viewBox="0 0 13 13" fill="none" stroke="#666">
            <path d="M0.500 0.500h12v12H0.500zM3.500 2.500h6v8h-6zM5 4.500h3M5 6.500h3M5 8.500h3" />
          </svg>
        </ViewButton>
        <ViewButton aria-label="Страничный режим">
          <svg width="13" height="13" viewBox="0 0 13 13" fill="none" stroke="#666">
            <path d="M0.500 0.500h12v12H0.500zM0.500 7.500h8V0.500M4.500 0.500v7" />
          </svg>
        </ViewButton>
      </ViewButtons>
      <svg width="16" height="9" viewBox="0 0 16 9">
        <path d="M6 4h8v1H6z" fill="#555" />
      </svg>
      <ZoomRange type="range" min="0" max="200" defaultValue="100" aria-label="Масштаб" />
      <svg width="9" height="9" viewBox="0 0 9 9">
        <path d="M0 4h9v1H0zM4 0h1v9H4z" fill="#555" />
      </svg>
      <ZoomLabel>100 %</ZoomLabel>
    </StatusBar>
  );
}

function Tasks() {
  return (
    <TaskBar>
      <TaskButton aria-label="Пуск">
        <svg width="16" height="16" viewBox="0 0 16 16" fill="#fff">
          <path d="M0 2.300L6.700 1.400v6.200H0zM7.500 1.300L16 0v7.600H7.500zM0 8.400h6.700v6.200L0 13.700zM7.500 8.400H16V16l-8.500-1.300z" />
        </svg>
      </TaskButton>
      <TaskButton aria-label="Поиск">
        <svg width="16" height="16" viewBox="0 0 16 16" fill="none" stroke="#fff" strokeWidth="1.500">
          <circle cx="9.500" cy="6.500" r="5.700" />
          <path d="M5.500 10.500L0.500 15.500" />
        </svg>
      </TaskButton>
      <TaskButton aria-label="Яндекс">
        <svg width="16" height="16" viewBox="0 0 16 16">
          <circle cx="8" cy="8" r="8" fill="#fc3f1d" />
          <path d="M10.200 3.500v9M10.200 4.300H8.600c-2.600 0-2.600 4 0 4h1.600M8.300 8.300l-2.500 4.200" stroke="#fff" strokeWidth="1.500" fill="none" />
        </svg>
      </TaskButton>
      <TaskButton aria-label="Edge">
        <svg width="17" height="16" viewBox="0 0 17 16">
          <circle cx="8.500" cy="8" r="8" fill="#1b82d2" />
          <path d="M0.700 6.500C2-1.500 14-2 16.300 6c.5 3-2 4.500-5 4-1.500-.3-1-1.500-.7-2.500C10.500 4 4 2.500.7 6.500z" fill="#3cc8a8" />
          <path d="M10 1c4 1 6 3.500 6.300 6-.3 2-2 3.200-4 3.100z" fill="#62d85c" />
          <path d="M6 8c-1 4 3 7 8.500 5.500-3 3.500-9 3-11-1C2.500 9.500 4 8 6 8z" fill="#114a8b" />
        </svg>
      </TaskButton>
      <TaskButton $open aria-label="Проводник">
        <svg width="16" height="15" viewBox="0 0 16 15">
          <path d="M0 1h6l2 2h8v11H0z" fill="#e8a91c" />
          <path d="M0 4h16v10H0z" fill="#fddb67" />
          <path d="M3 15V9h10v6h-3v-3H6v3z" fill="#3a96dd" />
        </svg>
      </TaskButton>
      <TaskButton aria-label="Opera">
        <svg width="16" height="16" viewBox="0 0 16 16">
          <ellipse cx="8" cy="8" rx="8" ry="8" fill="#e5182c" />
          <path d="M8 0a8 8 0 0 1 0 16c6-2 6-14 0-16z" fill="#a5091c" />
          <ellipse cx="8" cy="8" rx="3.200" ry="5.500" fill="#101010" />
        </svg>
      </TaskButton>
      <TaskButton aria-label="Ножницы">
        <svg width="17" height="16" viewBox="0 0 17 16">
          <ellipse cx="8.500" cy="6.500" rx="7.500" ry="4.500" fill="#e9e9ee" stroke="#c33" transform="rotate(-25 8.500 6.500)" />
          <path d="M2 11c3 2 6 1 8-1" stroke="#c33" strokeWidth="2" fill="none" />
          <path d="M7 4l3 4M10 8l2 5M9 10l6 1" stroke="#456" />
          <circle cx="14.500" cy="10.500" r="1.700" fill="none" stroke="#2d8be0" />
          <circle cx="12" cy="13.500" r="1.700" fill="none" stroke="#2d8be0" />
        </svg>
      </TaskButton>
      <TaskButton $open aria-label="Яндекс Браузер">
        <svg width="16" height="16" viewBox="0 0 16 16">
          <circle cx="8" cy="8" r="8" fill="#fff" />
          <path d="M3.500 3.500L8 8.500v5.500M12.500 3.500L8 8.500" stroke="#f43a4e" strokeWidth="2.500" fill="none" />
        </svg>
      </TaskButton>
      <TaskButton $open $active aria-label="Excel">
        <svg width="16" height="16" viewBox="0 0 16 16">
          <path d="M4 0h12v16H4z" fill="#185c37" />
          <path d="M4 0h6v4H4z" fill="#21a366" />
          <path d="M10 0h6v4h-6z" fill="#33c481" />
          <path d="M10 4h6v4h-6z" fill="#21a366" />
          <path d="M4 4h6v4H4z" fill="#107c41" />
          <path d="M0 3h10v10H0z" fill="#107c41" />
          <path d="M3 5l4 6M7 5l-4 6" stroke="#fff" strokeWidth="1.500" />
        </svg>
      </TaskButton>
      <Tray>
        <Chevron w={12} up color="#fff" stroke={1.5} />
        <svg width="12" height="17" viewBox="0 0 12 17" fill="none" stroke="#fff">
          <rect x="3" y="0" width="6" height="11" rx="1" fill="#fff" stroke="none" />
          <path d="M1 9v4h10V9M6 13v3M3 16.500h6" />
        </svg>
        <svg width="14" height="14" viewBox="0 0 14 14" fill="none" stroke="#ddd">
          <path d="M0.500 13A12 12 0 0 1 13 1.500M3.500 13A9 9 0 0 1 13 4.500M6.500 13A6 6 0 0 1 13 7.500M9.500 13A3.500 3.500 0 0 1 13 10.500" />
          <circle cx="12" cy="12.500" r="1.500" fill="#fff" stroke="none" />
        </svg>
        <svg width="14" height="14" viewBox="0 0 14 14">
          <path d="M0 4h4l5-4v14L4 10H0z" fill="#e0694a" />
          <path d="M11.500 4v6M13.500 2.500v9" stroke="#5e2a1e" />
        </svg>
        <svg width="15" height="9" viewBox="0 0 15 9">
          <path d="M0.500 0.500h12v8H0.500z" fill="none" stroke="#fff" />
          <path d="M2 2h9v5H2zM13 3h2v3h-2z" fill="#fff" />
        </svg>
        <svg width="16" height="13" viewBox="0 0 16 13" fill="none" stroke="#fff">
          <path d="M0.500 4.500h3L6.500 1.500v10l-3-3h-3zM9 4.500c1 1 1 3 0 4" />
          <path d="M11.500 2.500c2 2 2 6 0 8M13.500 1c2.500 3 2.500 8 0 11" stroke="#888" />
        </svg>
        <TrayText>РУС</TrayText>
        <TrayText>12:56</TrayText>
        <svg width="16" height="16" viewBox="0 0 16 16" fill="none" stroke="#fff">
          <path d="M0.500 1.500h15v11h-5l-2 2.500-2-2.500h-6z" />
        </svg>
      </Tray>
    </TaskBar>
  );
}

function FilterMenu() {
  return (
    <Menu>
      <MenuItem>
        <SortIcon />
        <span>
          Сортировка от <u>А</u> до Я
        </span>
      </MenuItem>
      <MenuItem>
        <SortIcon reverse />
        <span>
          Сортировка от <u>Я</u> до А
        </span>
      </MenuItem>
      <MenuItem>
        <i />
        <span>
          <u>С</u>ортировка по цвету
        </span>
        <Arrow dir="right" />
      </MenuItem>
      <MenuRule />
      <MenuItem disabled>
        <ClearFilter />
        <span>
          <u>У</u>далить фильтр из столбца "Статья ДДС"
        </span>
      </MenuItem>
      <MenuItem>
        <i />
        <span>
          <u>Ф</u>ильтр по цвету
        </span>
        <Arrow dir="right" />
      </MenuItem>
      <MenuItem>
        <i />
        <span>
          Текстовые <u>ф</u>ильтры
        </span>
        <Arrow dir="right" />
      </MenuItem>
      <MenuRule />
      <SearchBox>
        <input placeholder="Поиск" aria-label="Поиск" />
        <svg width="14" height="14" viewBox="0 0 14 14" fill="none" stroke="#3f78b5">
          <circle cx="8.500" cy="5.500" r="3.800" strokeWidth="1.600" />
          <path d="M5.500 8.500L1 13" strokeWidth="2.500" />
        </svg>
      </SearchBox>
      <CheckList>
        <CheckItems>
          {articles.map((name) => (
            <CheckRow key={name}>
              <CheckMark>
                <CheckBox type="checkbox" defaultChecked />
                <Tick />
              </CheckMark>
              {name}
            </CheckRow>
          ))}
        </CheckItems>
        <ListScroll>
          <Chevron w={8} up stroke={2} />
          <ListThumb />
          <Chevron w={8} stroke={2} />
        </ListScroll>
      </CheckList>
      <MenuActions>
        <DialogButton $primary>ОК</DialogButton>
        <DialogButton>Отмена</DialogButton>
      </MenuActions>
      <Grip>
        <svg width="6" height="6" viewBox="0 0 6 6" fill="#aaa">
          <path d="M4 0h2v2H4zM4 4h2v2H4zM0 4h2v2H0z" />
        </svg>
      </Grip>
    </Menu>
  );
}

export default function App() {
  return (
    <Window>
      <GlobalStyle />
      <Header />
      <Ribbon />
      <MessageBar>
        <svg width="16" height="18" viewBox="0 0 16 18">
          <path d="M8 0l8 2v6c0 5-3 8-8 10-5-2-8-5-8-10V2z" fill="#f0c987" />
          <path d="M9 4h2v7H9zM9 13h2v2H9z" fill="#444" />
        </svg>
        <Warning>ПРЕДУПРЕЖДЕНИЕ СИСТЕМЫ БЕЗОПАСНОСТИ</Warning>
        <span>Подключения к внешним данным отключены</span>
        <EnableButton>Включить содержимое</EnableButton>
        <CloseMessage aria-label="Закрыть">
          <svg width="9" height="9" viewBox="0 0 9 9" stroke="#666" strokeWidth="2">
            <path d="M1 1l7 7M8 1l-7 7" />
          </svg>
        </CloseMessage>
      </MessageBar>
      <FormulaBar>
        <NameBox defaultValue="A1" aria-label="Имя" />
        <FormulaField>
          <input defaultValue="и Финансиста" aria-label="Строка формул" />
          <Chevron w={8} stroke={2} />
        </FormulaField>
      </FormulaBar>
      <Sheet />
      <SheetTabs />
      <Status />
      <Tasks />
      <FilterMenu />
    </Window>
  );
}
